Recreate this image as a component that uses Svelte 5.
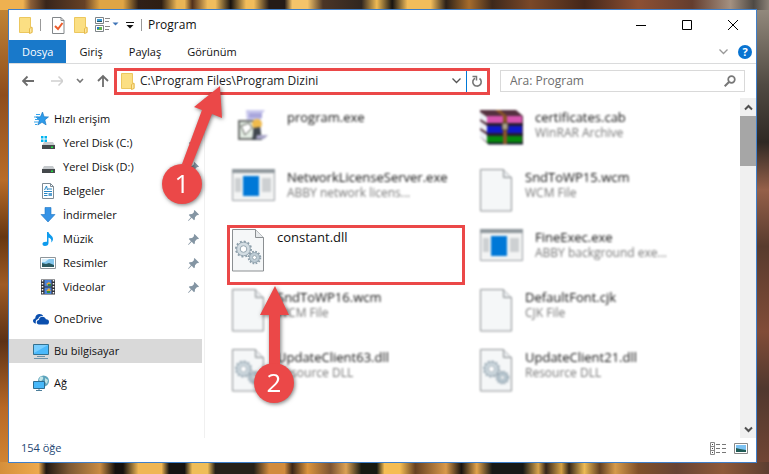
<script>
  const tabs = ["Giriş", "Paylaş", "Görünüm"];

  const quickAccess = [
    { icon: "diskc", label: "Yerel Disk (C:)" },
    { icon: "disk", label: "Yerel Disk (D:)" },
    { icon: "document", label: "Belgeler" },
    { icon: "download", label: "İndirmeler" },
    { icon: "music", label: "Müzik" },
    { icon: "picture", label: "Resimler" },
    { icon: "video", label: "Videolar" },
  ];

  const places = [
    { icon: "onedrive", label: "OneDrive" },
    { icon: "computer", label: "Bu bilgisayar", selected: true },
    { icon: "network", label: "Ağ" },
  ];

  const files = [
    { icon: "setup", name: "program.exe" },
    { icon: "rar", name: "certificates.cab", type: "WinRAR Archive" },
    { icon: "exe", name: "NetworkLicenseServer.exe", type: "ABBY network licens..." },
    { icon: "page", name: "SndToWP15.wcm", type: "WCM File" },
    { icon: "dll", name: "constant.dll", marked: true },
    { icon: "exe", name: "FineExec.exe", type: "ABBY background exe..." },
    { icon: "page", name: "SndToWP16.wcm", type: "WCM File" },
    { icon: "page", name: "DefaultFont.cjk", type: "CJK File" },
    { icon: "dll", name: "UpdateClient63.dll", type: "Resource DLL" },
    { icon: "dll", name: "UpdateClient21.dll", type: "Resource DLL" },
  ];

  let path = "C:\\Program Files\\Program Dizini";
  let query = "";
</script>

{#snippet folder()}
  <svg width="14" height="17" viewBox="0 0 14 17" aria-hidden="true">
    <path d="M.5.5h11v9.500l1.500 1v4.500H.5z" fill="#fbdf83" stroke="#ecc75e" />
    <path d="M10.500 16.500v-5l2.500-1.500v5.500z" fill="#ffe9a2" stroke="#e5b94a" />
  </svg>
{/snippet}

{#snippet sideIcon(name)}
  <svg width="16" height="16" viewBox="0 0 16 16" aria-hidden="true">
    {#if name === "star"}
      <path d="M9.500 1l1.600 4.700 4.400.2-3.600 3 1.200 5L9 11.300 4.800 14l1.400-4.800L3 6l4.400-.2z" fill="#2d9bea" stroke="#1673bd" stroke-width=".6" />
      <path d="M3 3.500h4M1 6h4M2 8.500h3M1 11h4M2 13.500h2" stroke="#35a5ee" />
    {:else if name === "diskc" || name === "disk"}
      {#if name === "diskc"}
        <path d="M1 1h2.500v2.500H1zM4.500 1H7v2.500H4.500zM1 4.500h2.500V7H1zM4.500 4.500H7V7H4.500z" fill="#00b4f0" />
      {/if}
      <path d="M4 7h9l2 3.500H2z" fill="#c5c9cc" />
      <path d="M2 10h13v4H2z" fill="#44484b" />
      <path d="M11 11.500h2v1.500h-2z" fill="#20e040" />
    {:else if name === "document"}
      <path d="M2.500.5h8l3 3v12h-11z" fill="#fff" stroke="#7d8b95" />
      <path d="M10.500.5v3h3" fill="none" stroke="#7d8b95" />
      <path d="M4.500 7l2-4 1 4M8 6h4M4 8.500h8M4 10.500h3.500M4 12.500h3.500" fill="none" stroke="#2787c5" />
      <path d="M8.500 10h3.500v3H8.500z" fill="#5ba0d0" />
    {:else if name === "download"}
      <path d="M5 .5h6v7h4L8 15 1 7.500h4z" fill="#3693e6" stroke="#1d75c4" stroke-width=".6" />
    {:else if name === "music"}
      <path d="M7 1h1.500c.5 3 4.500 3.500 4.500 7 0 1.500-.8 2.700-1.800 3.500.8-2.800-.5-4.300-2.700-5V12c0 1.700-1.300 3-3.500 3S2.500 13.800 2.500 12.700 4 10.500 7 10.800z" fill="#0e9bed" />
    {:else if name === "picture"}
      <path d="M.5 2.500h15v11H.5z" fill="#fff" stroke="#8e969b" />
      <path d="M2 4h12v8H2z" fill="#84c7ee" />
      <path d="M2 8l4 1 3-1 5 2v2H2z" fill="#2a5960" />
      <path d="M2 4h7L5 7H2z" fill="#d7effb" />
    {:else if name === "video"}
      <path d="M1 .5h14v15H1z" fill="#303238" />
      <path d="M4.500 1h7v6.500h-7zM4.500 8.500h7V15h-7z" fill="#4a82da" />
      <path d="M6 5l3-2 2 2-2 2zM6 12l3-3 2 3z" fill="#e4a83a" />
      <path d="M8 5h3v2H8zM7 12h3v2H7z" fill="#2f8b43" />
      <path d="M2.500 1v14M13.500 1v14" stroke="#fff" stroke-width="1.500" stroke-dasharray="1.500 1.500" />
    {:else if name === "onedrive"}
      <path d="M3 12.500C.8 12.500 0 11 0 9.800 0 8.400 1 7.500 2.200 7.400 2.200 4.500 4.500 3 6.500 3 8.200 3 9.600 3.800 10.200 5 7.500 4.600 5.600 6 5.200 8c-2.200.2-3 2.500-2.200 4.500z" fill="#0b4fae" />
      <path d="M6 13.500c-3 0-3-4.300 0-4.500.2-2.200 1.800-3.300 3.600-3.200 1.600 0 2.800 1 3.300 2.500 2-.1 3.100 1 3.100 2.600S15 13.500 13.500 13.500z" fill="#0b4fae" />
    {:else if name === "computer"}
      <path d="M.5 1.500h15v10H.5z" fill="#4bb9fb" stroke="#34708f" />
      <path d="M1 2h14L1 10z" fill="#78ceff" />
      <path d="M4 13.500h8M1 15.500h14" stroke="#6c93ab" />
    {:else}
      <circle cx="10.500" cy="6" r="5.500" fill="#5da4bd" />
      <path d="M7 2c2-1.500 4 0 3 2S7 7 6 5zM12 3l3 2-1 4-2-2z" fill="#c1e4e7" />
      <path d="M.5 6.500h11v7H.5z" fill="#48b8f9" stroke="#2d6d92" />
      <path d="M6 14v1.500M3 15.500h6" stroke="#4d7f9b" />
    {/if}
  </svg>
{/snippet}

{#snippet fileIcon(name)}
  {#if name === "page" || name === "dll"}
    <svg width="33" height="43" viewBox="0 0 33 43" aria-hidden="true">
      <path d="M.5.500h23l8 8v33.500H.5z" fill="#f5f7f8" stroke="#8b8f92" />
      <path d="M23.500.5v8h8" fill="#e7eaec" stroke="#8b8f92" />
      {#if name === "dll"}
        <circle cx="11.500" cy="20" r="7.500" fill="none" stroke="#8d9fab" stroke-width="2" stroke-dasharray="2 1.930" />
        <circle cx="11.500" cy="20" r="5" fill="#fff" stroke="#d3dde3" stroke-width="3.500" />
        <circle cx="11.500" cy="20" r="6.800" fill="none" stroke="#94a5b0" />
        <circle cx="11.500" cy="20" r="3.300" fill="#fff" stroke="#94a5b0" />
        <circle cx="22.500" cy="28.500" r="5.800" fill="none" stroke="#8d9fab" stroke-width="2" stroke-dasharray="1.700 1.340" />
        <circle cx="22.500" cy="28.500" r="3.700" fill="#fff" stroke="#bdccd5" stroke-width="3" />
        <circle cx="22.500" cy="28.500" r="5" fill="none" stroke="#94a5b0" />
        <circle cx="22.500" cy="28.500" r="2" fill="#fff" stroke="#94a5b0" />
      {/if}
    </svg>
  {:else if name === "exe"}
    <svg width="43" height="33" viewBox="0 0 43 33" aria-hidden="true">
      <path d="M.5.5h42v31H.5z" fill="#f3f4f4" stroke="#9a9fa3" />
      <path d="M0 0h43v4H0z" fill="#8f979c" />
      <path d="M3 9h6v14H3zM30 9h9v14h-9z" fill="#cdd0d2" />
      <path d="M11 7h16v20H11z" fill="#0078d7" />
    </svg>
  {:else if name === "rar"}
    <svg width="43" height="36" viewBox="0 0 43 36" aria-hidden="true">
      <path d="M0 1h36l7 6v28H8L0 28z" fill="#54303f" />
      <path d="M0 3l7 5v6l-7-4zM0 12l7 5v6l-7-4zM0 21l7 5v7l-7-5z" fill="#eceff5" />
      <path d="M7 7h35v7H7z" fill="#d654ae" />
      <path d="M7 17h35v7H7z" fill="#1018c8" />
      <path d="M7 27h35v7H7z" fill="#068a0c" />
      <path d="M7 15.500h36M7 25.500h36M8 34.500h35" stroke="#15152c" stroke-width="2" />
      <path d="M15 1h5l7 6v28h-4V7z" fill="#8a5528" />
      <path d="M22 14h6v7h-6z" fill="#aaa28b" stroke="#4d392b" />
    </svg>
  {:else}
    <svg width="43" height="33" viewBox="0 0 43 33" aria-hidden="true">
      <path d="M14 1h19l-4 5v22H16z" fill="#cac9ed" />
      <path d="M17 4h13v5H17z" fill="#a9a6dc" />
      <path d="M7 12h15v18H7z" fill="#e5eee5" stroke="#6f7270" stroke-width="2" />
      <path d="M9 17l8-3 3 5-7 7z" fill="#fff" stroke="#53564f" />
      <circle cx="25" cy="15" r="5" fill="#efba4c" />
      <path d="M22 19l6-1 2 13h-10z" fill="#40474e" />
      <path d="M25 26h11l-4 4h-8z" fill="#a9a6c8" />
    </svg>
  {/if}
{/snippet}

<div class="desktop">
  <main class="window">
    <header class="titlebar">
      <div class="quick-tools">
        {@render folder()}
        <span class="separator"></span>
        <button type="button" aria-label="Özellikler">
          <svg width="13" height="17" viewBox="0 0 13 17">
            <path d="M.5.5h8.500l3 3v13H.5z" fill="#fff" stroke="#83878a" />
            <path d="M9 .5v3h3" fill="none" stroke="#83878a" />
            <path d="M3 9l3 3 4.500-6" fill="none" stroke="#ec5b2b" stroke-width="2" />
          </svg>
        </button>
        <button type="button" aria-label="Yeni klasör">{@render folder()}</button>
        <button type="button" aria-label="Görünüm seçenekleri">
          <svg width="24" height="16" viewBox="0 0 24 16">
            <path d="M.5.5h8v6h-8zM.5 8.500h8v6h-8z" fill="#fff" stroke="#7d8387" />
            <path d="M2 2h5v3H2z" fill="#3c9bd8" /><path d="M2 4h5v1H2z" fill="#245465" />
            <path d="M2 10h5v3H2z" fill="#62b44d" /><path d="M2 10h2v2H2z" fill="#2b75ca" />
            <path d="M10 1.500h5M10 4.500h4M10 9.500h5M10 12.500h4" stroke="#888" />
            <path d="M17.500 5.500h6l-3 3z" fill="#4075b7" />
          </svg>
        </button>
        <button type="button" aria-label="Araç çubuğunu özelleştir">
          <svg width="8" height="8" viewBox="0 0 8 8">
            <path d="M0 1.500h8" stroke="#111" /><path d="M.5 4h7L4 7.500z" fill="#111" />
          </svg>
        </button>
        <span class="separator"></span>
      </div>
      <h1>Program</h1>
      <div class="window-buttons">
        <button type="button" aria-label="Simge durumuna küçült">
          <svg width="10" height="10" viewBox="0 0 10 10"><path d="M0 5.500h10" stroke="#000" /></svg>
        </button>
        <button type="button" aria-label="Ekranı kapla">
          <svg width="10" height="10" viewBox="0 0 10 10"><path d="M.5.500h9v9h-9z" fill="none" stroke="#000" /></svg>
        </button>
        <button type="button" aria-label="Kapat">
          <svg width="10" height="10" viewBox="0 0 10 10"><path d="M0 0l10 10M10 0L0 10" stroke="#000" /></svg>
        </button>
      </div>
    </header>

    <nav class="ribbon">
      <button class="tab file-tab" type="button">Dosya</button>
      {#each tabs as tab}
        <button class="tab" type="button">{tab}</button>
      {/each}
      <div class="ribbon-end">
        <button type="button" aria-label="Şeridi genişlet">
          <svg width="9" height="6" viewBox="0 0 9 6"><path d="M.5.5l4 4 4-4" fill="none" stroke="#999" stroke-width="1.300" /></svg>
        </button>
        <button class="help" type="button">?</button>
      </div>
    </nav>

    <div class="navigation">
      <div class="history">
        <button type="button" aria-label="Geri">
          <svg width="14" height="12" viewBox="0 0 14 12"><path d="M12 6H1M5.500 1.500L1 6l4.500 4.500" fill="none" stroke="#6d6d6d" stroke-width="1.800" /></svg>
        </button>
        <button type="button" aria-label="İleri">
          <svg width="14" height="12" viewBox="0 0 14 12"><path d="M2 6h12M9.500 1.500L14 6l-4.500 4.500" fill="none" stroke="#d0d0d0" stroke-width="1.500" /></svg>
        </button>
        <button type="button" aria-label="Son konumlar">
          <svg width="8" height="6" viewBox="0 0 8 6"><path d="M1 1l3 3 3-3" fill="none" stroke="#777" stroke-width="1.600" /></svg>
        </button>
        <button type="button" aria-label="Yukarı">
          <svg width="12" height="14" viewBox="0 0 12 14"><path d="M6 13V2M1 7l5-5 5 5" fill="none" stroke="#6d6d6d" stroke-width="1.800" /></svg>
        </button>
      </div>
      <div class="address">
        {@render folder()}
        <input type="text" aria-label="Adres" bind:value={path} />
        <button type="button" aria-label="Önceki konumlar">
          <svg width="9" height="6" viewBox="0 0 9 6"><path d="M.5.500l4 4 4-4" fill="none" stroke="#555" stroke-width="1.300" /></svg>
        </button>
        <button class="refresh" type="button" aria-label="Yenile">
          <svg width="12" height="13" viewBox="0 0 12 13">
            <path d="M8.500 3.500a4.200 4.200 0 1 1-4.500-.3" fill="none" stroke="#777" stroke-width="1.600" />
            <path d="M1.500 1.500H5.500V5.500" fill="none" stroke="#777" stroke-width="1.500" />
          </svg>
        </button>
      </div>
      <div class="search">
        <input type="text" aria-label="Ara" placeholder="Ara: Program" bind:value={query} />
        <svg width="12" height="12" viewBox="0 0 12 12" aria-hidden="true">
          <circle cx="7.500" cy="4.500" r="3.300" fill="none" stroke="#777" stroke-width="1.700" />
          <path d="M5 7l-4.300 4.300" stroke="#777" stroke-width="2" />
        </svg>
      </div>
    </div>

    <div class="content">
      <aside class="sidebar">
        <a class="place" href="#quick">{@render sideIcon("star")}Hızlı erişim</a>
        {#each quickAccess as item}
          <a class="place child" href="#{item.icon}">
            {@render sideIcon(item.icon)}
            <span>{item.label}</span>
            <svg class="pin" width="11" height="11" viewBox="0 0 11 11" aria-hidden="true">
              <path d="M6.500 0l4.500 4.500-1 .8-.9-.2L7 7.200l-.2 2.300-.8.700-2.300-2.400L.5 11l-.4-.4 2.800-3.400L.8 5l.8-.8 2.500-.3 2-2-.3-1z" fill="#8495a3" />
            </svg>
          </a>
        {/each}
        {#each places as item}
          <a class="place top" class:selected={item.selected} href="#{item.icon}">
            {@render sideIcon(item.icon)}{item.label}
          </a>
        {/each}
      </aside>

      <ul class="files">
        {#each files as file}
          <li class:marked={file.marked}>
            <div class="file" class:blurred={!file.marked}>
              {@render fileIcon(file.icon)}
              <div class="file-text">
                <span>{file.name}</span>
                {#if file.type}<small>{file.type}</small>{/if}
              </div>
            </div>
            {#if file.marked}
              <svg class="step step-two" width="44" height="124" viewBox="0 0 44 124" role="img" aria-label="2">
                <path d="M23 2L37 31H28V82H17V31H8z" fill="#eb4848" />
                <circle cx="22" cy="99" r="20" fill="#eb4848" />
                <text x="22" y="108" text-anchor="middle">2</text>
              </svg>
            {/if}
          </li>
        {/each}
      </ul>

      <div class="scrollbar">
        <button type="button" aria-label="Yukarı kaydır">
          <svg width="9" height="7" viewBox="0 0 9 7"><path d="M1 5.500L4.500 2 8 5.500" fill="none" stroke="#505050" stroke-width="2" /></svg>
        </button>
        <div class="thumb"></div>
        <button class="down" type="button" aria-label="Aşağı kaydır">
          <svg width="9" height="7" viewBox="0 0 9 7"><path d="M1 1.500L4.500 5 8 1.500" fill="none" stroke="#505050" stroke-width="2" /></svg>
        </button>
      </div>
    </div>

    <footer class="statusbar">
      <span>154 öğe</span>
      <button type="button" aria-label="Ayrıntılar">
        <svg width="17" height="13" viewBox="0 0 17 13">
          <path d="M.5.5h4v12h-4zM.5 4.500h4M.5 8.500h4" fill="#fff" stroke="#888" />
          <path d="M2 2.500h1M2 6.500h1M2 10.500h1" stroke="#444" />
          <path d="M6 2.500h4M12 2.500h4M6 6.500h4M12 6.500h4M6 10.500h4M12 10.500h4" stroke="#777" />
        </svg>
      </button>
      <button type="button" aria-label="Büyük simgeler">
        <svg width="14" height="11" viewBox="0 0 14 11">
          <path d="M.5.5h13v10H.5z" fill="#fff" stroke="#888" />
          <path d="M2 2h10v7H2z" fill="#7cc2f2" /><path d="M2 5l4 1 6 1v2H2z" fill="#1f5b55" />
        </svg>
      </button>
    </footer>

    <svg class="step step-one" width="66" height="128" viewBox="0 0 66 128" role="img" aria-label="1">
      <path d="M60 6L62 38 52 34 31 87 22 84 42 30 34 27z" fill="#eb4848" />
      <circle cx="22" cy="104" r="20" fill="#eb4848" />
      <text x="22" y="113" text-anchor="middle">1</text>
    </svg>
  </main>
</div>

<style>
  :global(body) {
    margin: 0;
  }

  .desktop,
  .desktop * {
    box-sizing: border-box;
  }

  /* wood grain: top and bottom strips of stripes, plain bark down the sides */
  .desktop {
    display: grid;
    min-height: 100vh;
    padding: 9px 12px 11px 8px;
    font: 12px/16px "Open Sans", "Noto Sans", sans-serif;
    color: #111;
    background:
      linear-gradient(90deg, #eeb150 0 3%, #8b5e37 4%, #38251b 6%, #664126 11%, #e0a544 13% 16%, #302018 18%, #2e1e13 21%, #eab555 23% 24%, #51301b 25%, #f0bd5d 27% 28%, #17120f 30%, #f2bd5b 32% 33%, #251b17 35% 37%, #f5c46a 38% 40%, #4b3526 42%, #302620 47%, #f0bb55 49%, #171411 51%, #f3bd5b 53% 56%, #2b2018 58%, #a66c2c 61%, #3d281b 64%, #7a4828 69%, #432619 76%, #8d5033 83%, #643d2e 90%, #a49181 95%, #4e4944 98%, #8b8277) top / 100% 10px no-repeat,
      linear-gradient(90deg, #d58f3b, #eda94d 5%, #211812 6%, #7d5934 9%, #c88b43 13%, #15110e 15% 16%, #efb654 18% 21%, #151312 22% 24%, #efbd58 25% 27%, #262119 28% 33%, #d18b3d 35% 37%, #3b2618 38%, #db943d 40%, #7d5432 43%, #dba154 45%, #171a12 47% 49%, #f5bd53 50% 52%, #664122 54%, #d9994a 58%, #181410 60%, #e2a34b 62%, #171917 64% 68%, #d6a34c 70%, #34251b 71%, #d4a145 73%, #352719 74%, #edbb55 76%, #624023 78%, #d59a4b 80%, #805029 83%, #674334 88%, #8e5939 94%, #5c3e31) bottom / 100% 12px no-repeat,
      linear-gradient(#c78a37, #8e4d1d 20%, #b86c29 38%, #673711 50%, #9f5b24 60%, #5c3116 72%, #b76826 86%, #d68a35) left / 9px 100% no-repeat,
      linear-gradient(#9b9184, #504a42 18%, #2f2924 30%, #956049 40%, #583b2e 52%, #814c38 70%, #50382e 82%, #764735) right / 13px 100% no-repeat,
      #69442c;
  }

  .window {
    position: relative;
    display: flex;
    flex-direction: column;
    min-width: 0;
    background: #fff;
    border: 1px solid #3f7fc9;
  }

  button {
    display: flex;
    align-items: center;
    justify-content: center;
    padding: 0;
    border: 0;
    background: none;
    color: inherit;
    font: inherit;
  }

  svg {
    display: block;
    flex: none;
  }

  input {
    min-width: 0;
    flex: 1;
    padding: 0;
    border: 0;
    outline: 0;
    background: none;
    color: #222;
    font: inherit;
  }

  .titlebar {
    display: flex;
    align-items: center;
    height: 30px;
    padding-left: 10px;
  }

  .quick-tools {
    display: flex;
    align-items: center;
    gap: 7px;
  }

  .separator {
    width: 1px;
    height: 12px;
    background: #999;
  }

  .separator + button {
    margin: 0 2px 0 4px;
  }

  h1 {
    margin: 0 0 0 6px;
    font-size: 12px;
    font-weight: 400;
  }

  .window-buttons {
    display: flex;
    align-self: stretch;
    margin-left: auto;
  }

  .window-buttons button {
    width: 46px;
  }

  .ribbon {
    display: flex;
    height: 24px;
    border-bottom: 1px solid #dadbdc;
  }

  .tab {
    padding: 0 13px;
    font-size: 11px;
  }

  .file-tab {
    background: #1979ca;
    color: #fff;
  }

  .ribbon-end {
    display: flex;
    align-items: center;
    gap: 10px;
    margin-left: auto;
    padding-right: 4px;
  }

  .help {
    width: 14px;
    height: 14px;
    border-radius: 50%;
    background: #0873d1;
    color: #fff;
    font-size: 11px;
    font-weight: 700;
  }

  .navigation {
    display: flex;
    align-items: center;
    height: 34px;
    padding-right: 11px;
  }

  .history {
    display: flex;
    align-items: center;
    gap: 13px;
    padding: 0 5px 0 13px;
  }

  .address {
    display: flex;
    align-items: center;
    flex: 1;
    min-width: 0;
    height: 27px;
    gap: 5px;
    padding-left: 4px;
    border: 3px solid #eb4848;
  }

  .refresh {
    align-self: stretch;
    width: 21px;
    border-left: 1px solid #0078d7;
  }

  .search {
    display: flex;
    align-items: center;
    flex: 0 1 245px;
    min-width: 0;
    height: 22px;
    margin-left: 10px;
    padding: 0 8px 0 9px;
    border: 1px solid #d9d9d9;
  }

  .search input::placeholder {
    color: #6d6d6d;
    opacity: 1;
  }

  .content {
    display: flex;
    flex: 1;
  }

  .sidebar {
    flex: none;
    width: 196px;
    padding: 9px 2px 0 0;
    border-right: 1px solid #f0f0f0;
    font-size: 11px;
  }

  .place {
    display: flex;
    align-items: center;
    gap: 5px;
    height: 24px;
    padding-left: 24px;
    color: #111;
    text-decoration: none;
  }

  .child {
    gap: 7px;
    padding: 0 3px 0 31px;
  }

  .top {
    margin-top: 8px;
  }

  .selected {
    background: #d9d9d9;
  }

  .pin {
    margin-left: auto;
  }

  .files {
    display: grid;
    grid-template-columns: repeat(2, minmax(0, 248px));
    grid-auto-rows: 60px;
    flex: 1;
    min-width: 0;
    margin: 0;
    padding: 7px 0 0 22px;
    list-style: none;
    font-size: 13px;
  }

  li {
    position: relative;
    margin-right: 10px;
    padding: 4px 5px;
  }

  .marked {
    z-index: 1;
    padding: 1px 2px;
    border: 3px solid #eb4848;
  }

  .file {
    display: flex;
    align-items: flex-start;
    gap: 12px;
  }

  .blurred {
    filter: blur(1.3px);
  }

  .file-text {
    display: flex;
    flex-direction: column;
    white-space: nowrap;
  }

  small {
    color: #777;
    font-size: 12px;
  }

  .scrollbar {
    display: flex;
    flex-direction: column;
    width: 16px;
    background: #f0f0f0;
  }

  .scrollbar button {
    height: 18px;
  }

  .thumb {
    height: 50px;
    background: #a6a6a6;
  }

  .scrollbar .down {
    margin-top: auto;
  }

  .statusbar {
    display: flex;
    align-items: center;
    gap: 7px;
    height: 24px;
    padding: 0 8px 4px 12px;
    color: #254774;
    font-size: 11px;
  }

  .statusbar span {
    margin-right: auto;
  }

  .step {
    position: absolute;
    z-index: 2;
    overflow: visible;
    filter: drop-shadow(1px 1px 2px #0008);
    pointer-events: none;
  }

  .step text {
    fill: #fff;
    font-size: 26px;
    font-weight: 500;
  }

  .step-one {
    top: 70px;
    left: 151px;
  }

  .step-two {
    top: 56px;
    left: 22px;
  }
</style>
